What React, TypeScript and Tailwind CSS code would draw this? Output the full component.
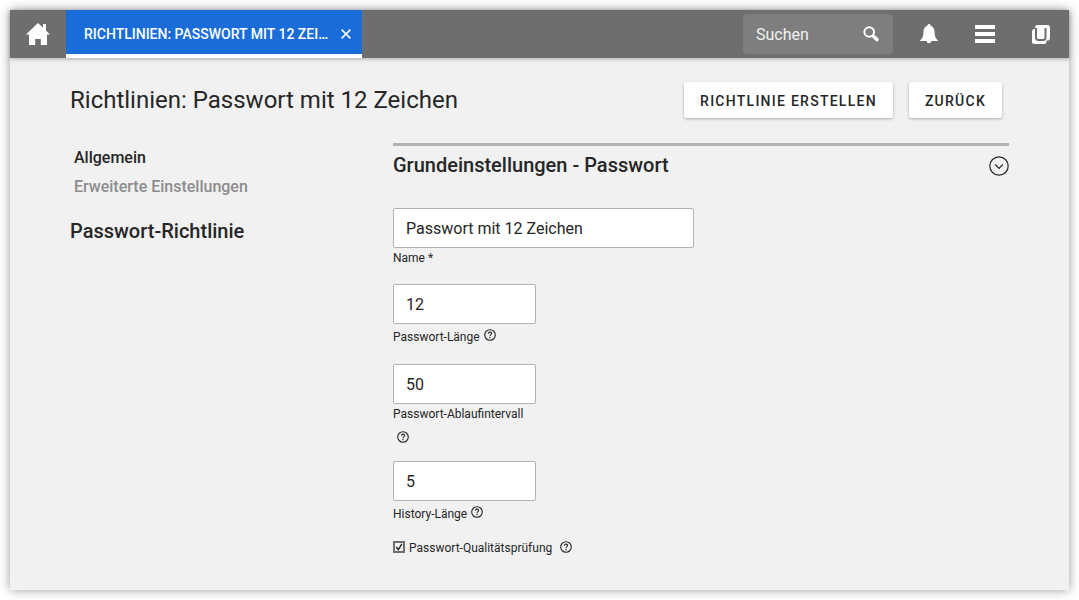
import React, { useState } from 'react';

function HelpIcon() {
  return (
    <svg viewBox="0 0 12 12" className="block size-3" fill="none" stroke="currentColor" aria-hidden="true">
      <circle cx="6" cy="6" r="5.3" strokeWidth="1.1" />
      <path d="M4.4 4.7c0-1 .7-1.6 1.6-1.6s1.6.6 1.6 1.5C7.6 5.7 6 5.7 6 7.2" strokeWidth="1.1" />
      <path d="M6 8v1.2" strokeWidth="1.2" />
    </svg>
  );
}

function HelpButton({ label, className }: { label: string; className: string }) {
  return (
    <button type="button" aria-label={`Hilfe: ${label}`} className={`shrink-0 ${className}`}>
      <HelpIcon />
    </button>
  );
}

function TextField({ id, value, width }: { id: string; value: string; width: string }) {
  return (
    <input
      id={id}
      type="text"
      defaultValue={value}
      className={`block h-10 rounded-xs border border-[#b2b2b2] bg-white px-3 text-base outline-none focus:border-[#1a6dd8] ${width}`}
    />
  );
}

function Header() {
  return (
    <header className="relative flex h-12 bg-[#6e6e6e] text-white shadow-[0_1px_4px_rgba(0,0,0,0.3)]">
      <button type="button" aria-label="Startseite" className="flex w-14 items-center justify-center">
        <svg viewBox="0 0 24 22" className="h-[22px] w-6" fill="currentColor" aria-hidden="true">
          <path d="M12 0 0 11.5h3V22h6.2v-6h5.6v6H21V11.5h3L20 7.6V1h-3v3.8z" />
        </svg>
      </button>
      <div className="flex w-[296px] items-center border-b-4 border-white bg-[#1a6dd8] pt-1 pr-2 pl-[18px]">
        <a href="#richtlinie" title="Richtlinien: Passwort mit 12 Zeichen" className="min-w-0 flex-1 text-sm font-medium uppercase">
          Richtlinien: Passwort mit 12 Zei…
        </a>
        <button type="button" aria-label="Tab schließen" className="flex size-4 shrink-0 items-center justify-center">
          <svg viewBox="0 0 10 10" className="size-[10px]" stroke="currentColor" strokeWidth="1.5" aria-hidden="true">
            <path d="M.6.6l8.8 8.8M9.4.6.6 9.4" />
          </svg>
        </button>
      </div>
      <div className="ml-auto flex items-center">
        <div className="mr-2 flex h-10 w-[150px] items-center rounded-sm bg-[#7e7e7e] pr-3">
          <input
            type="text"
            aria-label="Suchen"
            placeholder="Suchen"
            className="h-full min-w-0 flex-1 bg-transparent pl-[13px] text-base outline-none placeholder:text-[#f1f1f1]"
          />
          <button type="button" aria-label="Suche starten" className="flex size-5 items-center justify-center">
            <svg viewBox="0 0 16 16" className="size-4" fill="none" stroke="currentColor" aria-hidden="true">
              <circle cx="6.2" cy="6" r="4.8" strokeWidth="2" />
              <path d="m9.8 9.6 1.5 1.5" strokeWidth="2" />
              <path d="m11.2 10.9 2.7 2.7" strokeWidth="3.6" strokeLinecap="round" />
            </svg>
          </button>
        </div>
        <button type="button" aria-label="Benachrichtigungen" className="flex h-full w-14 items-center justify-center">
          <svg viewBox="0 0 18 20" className="h-5 w-[18px]" fill="currentColor" aria-hidden="true">
            <path d="M9 0c-.8 0-1.4.6-1.5 1.4C5 2.300 3.600 4.500 3.500 7.200c-.1 4-.7 6.700-2.400 8.200-.6.500-1 .8-1 1.600h6.600C6.900 18.300 7.800 19.300 9 19.300s2.100-1 2.300-2.300h6.600c0-.8-.4-1.100-1-1.600-1.700-1.500-2.300-4.200-2.400-8.200-.1-2.700-1.500-4.900-4-5.800C10.400.6 9.800 0 9 0z" />
          </svg>
        </button>
        <button type="button" aria-label="Menü" className="flex h-full w-14 items-center justify-center">
          <svg viewBox="0 0 20 18" className="h-[18px] w-5" fill="currentColor" aria-hidden="true">
            <path d="M0 0h20v4H0zM0 7h20v4H0zM0 14h20v4H0z" />
          </svg>
        </button>
        <button type="button" aria-label="Univention" className="flex h-full w-14 items-center justify-center">
          <svg viewBox="0 0 18 19" className="h-[19px] w-[18px]" aria-hidden="true">
            <rect x="0" y="4" width="14.500" height="15" rx="2.500" fill="#fff" />
            <rect x="3" y="0" width="15" height="15.500" rx="2.800" fill="#fff" />
            <path d="M4 3v9.500q0 2.500 2.500 2.500h4.500q2.500 0 2.500-2.500V3" fill="none" stroke="#6e6e6e" strokeWidth="2" />
          </svg>
        </button>
      </div>
    </header>
  );
}

function ActionButton({ children }: { children: React.ReactNode }) {
  return (
    <button
      type="button"
      className="h-9 rounded-xs bg-white px-4 pt-px text-sm font-medium tracking-[0.09em] uppercase shadow-[0_1px_3px_rgba(0,0,0,0.3)]"
    >
      {children}
    </button>
  );
}

export default function App() {
  const [quality, setQuality] = useState(true);

  return (
    <div className="flex min-h-screen flex-col bg-white p-[10px] font-[Roboto,sans-serif] text-[#262626]">
      <div className="flex flex-1 flex-col bg-[#f1f1f1] shadow-[0_0_10px_rgba(0,0,0,0.4)]">
        <Header />
        <main className="flex-1 px-[60px] pt-6 pb-8">
          <div className="flex items-center justify-between pr-[7px]">
            <h1 className="text-2xl leading-9">Richtlinien: Passwort mit 12 Zeichen</h1>
            <div className="flex gap-4">
              <ActionButton>Richtlinie erstellen</ActionButton>
              <ActionButton>Zurück</ActionButton>
            </div>
          </div>

          <div className="mt-[25px] flex">
            <nav className="w-[323px] shrink-0 font-medium">
              <ul className="pl-1 text-base leading-[29px]">
                <li>
                  <a href="#allgemein">Allgemein</a>
                </li>
                <li>
                  <a href="#erweitert" className="text-[#8c8c8c]">
                    Erweiterte Einstellungen
                  </a>
                </li>
              </ul>
              <h2 className="mt-4 text-xl">Passwort-Richtlinie</h2>
            </nav>

            <form className="min-w-0 flex-1 border-t-3 border-[#b2b2b2] text-xs" onSubmit={(e) => e.preventDefault()}>
              <div className="flex items-end justify-between pt-1">
                <h2 className="pb-0.5 text-xl leading-[30px] font-medium">Grundeinstellungen - Passwort</h2>
                <button type="button" aria-label="Abschnitt einklappen" className="mb-1.5">
                  <svg viewBox="0 0 20 20" className="block size-5" fill="none" stroke="currentColor" strokeWidth="1.2" aria-hidden="true">
                    <circle cx="10" cy="10" r="9.2" />
                    <path d="m6.2 8.5 3.8 3.8 3.8-3.8" />
                  </svg>
                </button>
              </div>

              <div className="mt-[26px]">
                <TextField id="name" value="Passwort mit 12 Zeichen" width="w-[301px]" />
                <label htmlFor="name" className="mt-0.5 block">
                  Name *
                </label>
              </div>

              <div className="mt-[18px]">
                <TextField id="length" value="12" width="w-[143px]" />
                <div className="mt-[5px] flex items-start">
                  <label htmlFor="length">Passwort-Länge</label>
                  <HelpButton label="Passwort-Länge" className="ml-1" />
                </div>
              </div>

              <div className="mt-[19px] w-[143px]">
                <TextField id="expiry" value="50" width="w-full" />
                <label htmlFor="expiry" className="mt-0.5 block">
                  Passwort-Ablaufintervall
                </label>
                <HelpButton label="Passwort-Ablaufintervall" className="mt-[9px] ml-1 block" />
              </div>

              <div className="mt-[18px]">
                <TextField id="history" value="5" width="w-[143px]" />
                <div className="mt-[5px] flex items-start">
                  <label htmlFor="history">History-Länge</label>
                  <HelpButton label="History-Länge" className="ml-1" />
                </div>
              </div>

              <div className="mt-[19px] flex items-start">
                <span className="grid">
                  <input
                    id="quality"
                    type="checkbox"
                    checked={quality}
                    onChange={(e) => setQuality(e.target.checked)}
                    className="peer col-start-1 row-start-1 size-3 appearance-none border-2 border-[#6e6e6e]"
                  />
                  <svg
                    viewBox="0 0 12 12"
                    className="pointer-events-none invisible col-start-1 row-start-1 size-3 peer-checked:visible"
                    fill="none"
                    stroke="currentColor"
                    strokeWidth="1.4"
                    aria-hidden="true"
                  >
                    <path d="m3.2 6 2.1 2.7L8.9 2.8" />
                  </svg>
                </span>
                <label htmlFor="quality" className="ml-1 leading-[14px]">
                  Passwort-Qualitätsprüfung
                </label>
                <HelpButton label="Passwort-Qualitätsprüfung" className="ml-2" />
              </div>
            </form>
          </div>
        </main>
      </div>
    </div>
  );
}
